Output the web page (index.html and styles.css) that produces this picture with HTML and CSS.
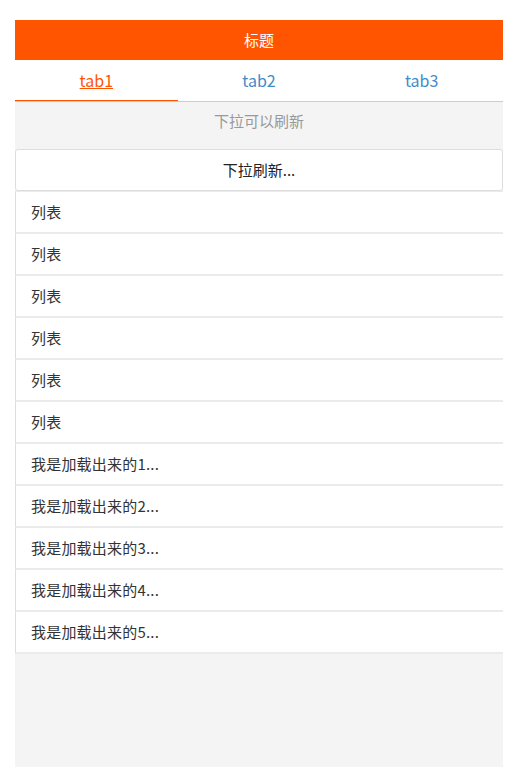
FILE: index.html
```html
<!DOCTYPE html>
<html lang="zh-CN">
<head>
<meta charset="utf-8">
<title>标题</title>
<link rel="stylesheet" href="styles.css">
</head>
<body>
<div class="page">
  <header class="bar">标题</header>
  <nav class="tabs">
    <a class="tab active" href="#">tab1</a>
    <a class="tab" href="#">tab2</a>
    <a class="tab" href="#">tab3</a>
  </nav>
  <div class="hint">下拉可以刷新</div>
  <div class="card">下拉刷新...</div>
  <ul class="list">
    <li>列表</li>
    <li>列表</li>
    <li>列表</li>
    <li>列表</li>
    <li>列表</li>
    <li>列表</li>
    <li>我是加载出来的1...</li>
    <li>我是加载出来的2...</li>
    <li>我是加载出来的3...</li>
    <li>我是加载出来的4...</li>
    <li>我是加载出来的5...</li>
  </ul>
</div>
</body>
</html>
```
FILE: styles.css
```css
html, body {
  margin: 0;
  padding: 0;
  background: #ffffff;
}
body {
  padding: 20px 28px 0 15px;
  font-family: "Microsoft YaHei", "Noto Sans CJK SC", "Noto Sans", sans-serif;
  font-size: 15px;
  color: #333333;
}
.page {
  height: 747px;
  background: #f4f4f4;
  display: flex;
  flex-direction: column;
}
.bar {
  height: 40px;
  line-height: 40px;
  background: #ff5500;
  color: #ffffff;
  text-align: center;
  font-size: 15px;
}
.tabs {
  display: grid;
  grid-template-columns: 1fr 1fr 1fr;
  background: #ffffff;
  border-bottom: 1px solid #cccccc;
}
.tab {
  height: 40px;
  line-height: 40px;
  text-align: center;
  font-size: 16px;
  color: #428bca;
  text-decoration: none;
  border-bottom: 1px solid transparent;
}
.tab.active {
  color: #ff5500;
  text-decoration: underline;
  border-bottom-color: #ff5500;
}
.hint {
  height: 47px;
  line-height: 37px;
  text-align: center;
  color: #999999;
}
.card {
  height: 40px;
  line-height: 40px;
  text-align: center;
  background: #ffffff;
  border: 1px solid #dddddd;
  border-radius: 3px;
  color: #222222;
}
.list {
  list-style: none;
  margin: 0;
  padding: 0;
}
.list li {
  height: 40px;
  line-height: 40px;
  padding-left: 15px;
  background: #ffffff;
  border-left: 1px solid #dddddd;
  border-bottom: 2px solid #ebebeb;
  letter-spacing: 0.2px;
}
.list li:first-child {
  border-top: 1px solid #ebebeb;
}
```
